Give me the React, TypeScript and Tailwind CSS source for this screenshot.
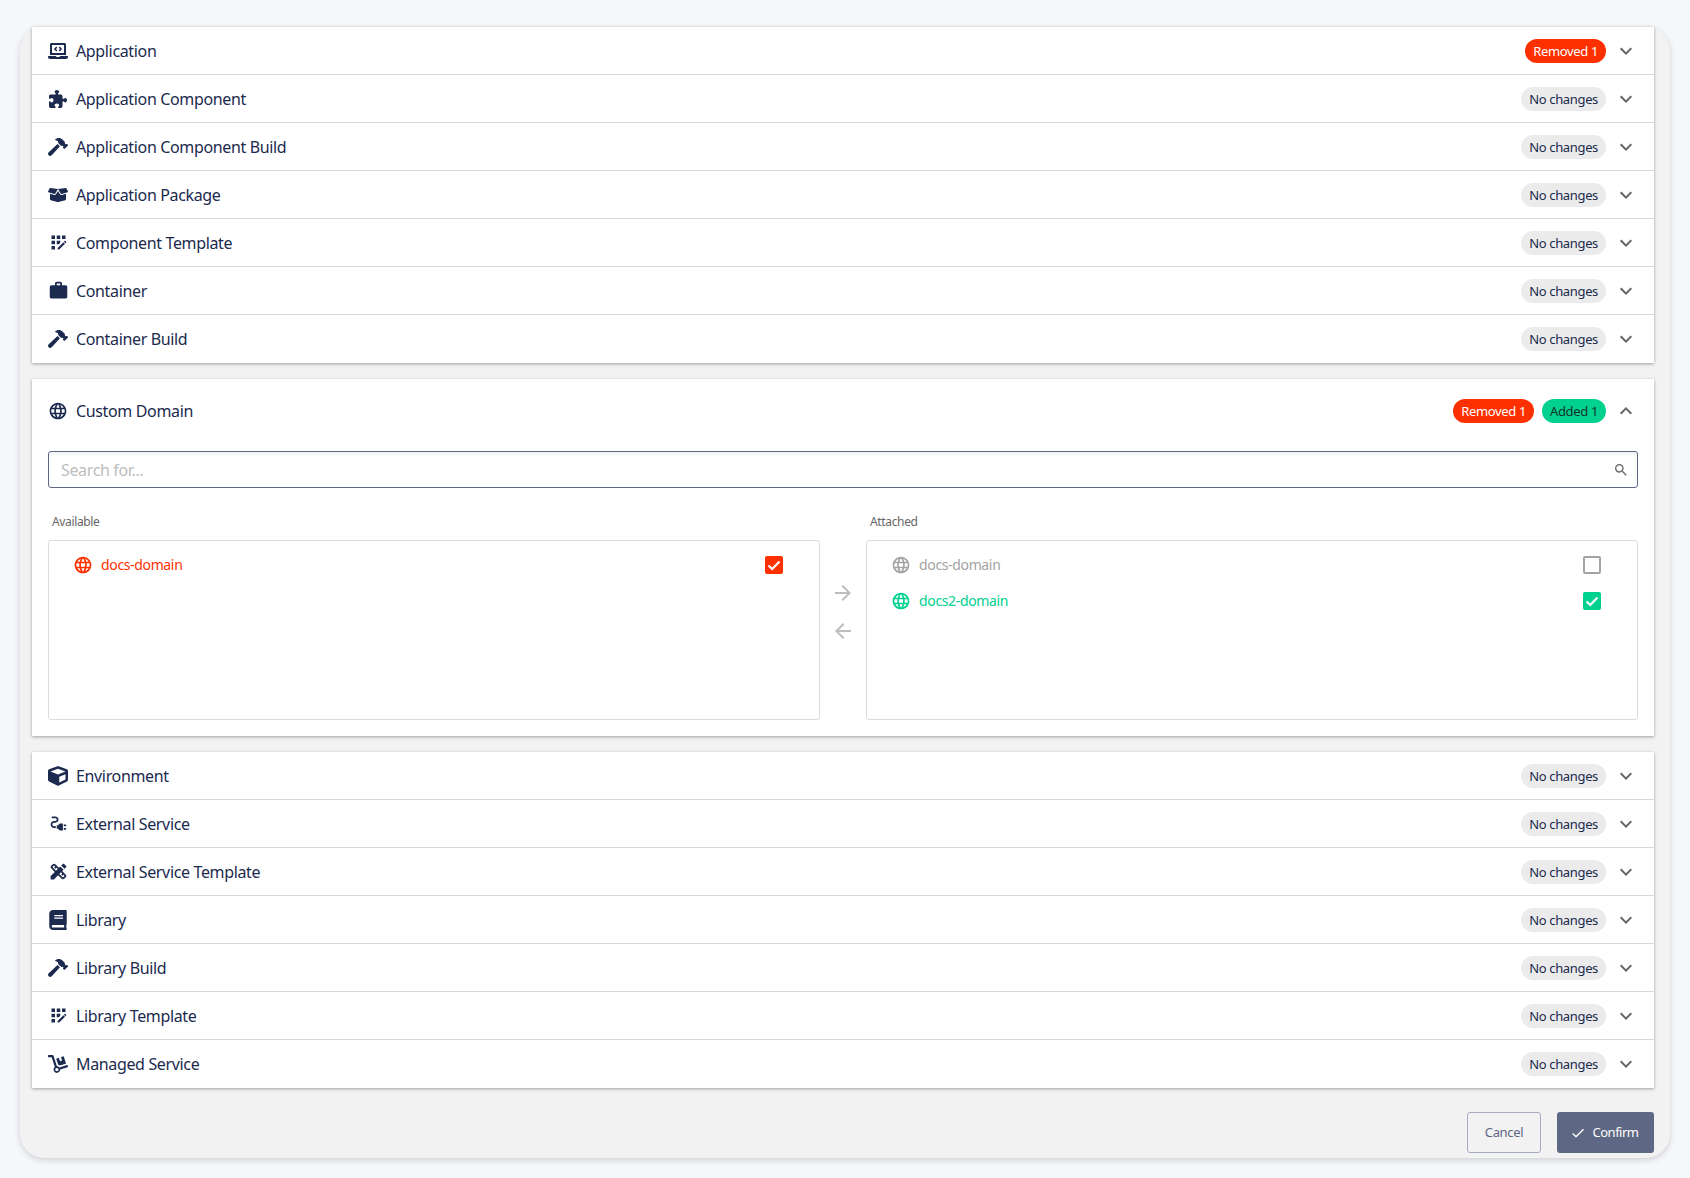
import React from 'react';
import { FaLaptopCode, FaHammer, FaBoxOpen, FaCube, FaBook, FaDolly } from 'react-icons/fa';
import { FaPuzzlePiece } from 'react-icons/fa6';
import { MdAppRegistration, MdDesignServices, MdWork, MdLanguage, MdSearch, MdArrowForward, MdArrowBack, MdElectricalServices, MdCheck, MdKeyboardArrowDown, MdKeyboardArrowUp } from 'react-icons/md';

const icon = 'w-5 h-5';
const matIcon = 'w-[21px] h-[21px] shrink-0';

const topRows = [
  { label: 'Application', icon: <FaLaptopCode className={icon} />, removed: true },
  { label: 'Application Component', icon: <FaPuzzlePiece className="w-[18px] h-[18px]" /> },
  { label: 'Application Component Build', icon: <FaHammer className={icon} /> },
  { label: 'Application Package', icon: <FaBoxOpen className={icon} /> },
  { label: 'Component Template', icon: <MdAppRegistration className={matIcon} /> },
  { label: 'Container', icon: <MdWork className={matIcon} /> },
  { label: 'Container Build', icon: <FaHammer className={icon} /> },
];

const bottomRows = [
  { label: 'Environment', icon: <FaCube className={icon} /> },
  { label: 'External Service', icon: <MdElectricalServices className={matIcon} /> },
  { label: 'External Service Template', icon: <MdDesignServices className={matIcon} /> },
  { label: 'Library', icon: <FaBook className={icon} /> },
  { label: 'Library Build', icon: <FaHammer className={icon} /> },
  { label: 'Library Template', icon: <MdAppRegistration className={matIcon} /> },
  { label: 'Managed Service', icon: <FaDolly className={icon} /> },
];

const Removed = () => (
  <span className="h-6 px-2 pt-[2px] rounded-full bg-[#ff3000] text-white text-[13px] flex items-center">Removed 1</span>
);

const Row = ({ label, icon, removed }: { label: string; icon: React.ReactNode; removed?: boolean }) => (
  <div className="h-12 flex items-center pl-4 pr-[18px] border-b border-[#d9d9d9] last:border-b-0">
    <span className="w-5 flex justify-center shrink-0">{icon}</span>
    <span className="ml-2 text-base">{label}</span>
    <div className="ml-auto flex items-center gap-[10px]">
      {removed ? (
        <Removed />
      ) : (
        <span className="h-6 px-2 pt-[2px] rounded-full bg-[#ebebeb] text-[13px] flex items-center">No changes</span>
      )}
      <MdKeyboardArrowDown className="w-5 h-5 scale-[1.2] text-[#666]" />
    </div>
  </div>
);

const Check = ({ color }: { color: string }) => (
  <span className={`w-[18px] h-[18px] rounded-[2px] flex items-center justify-center text-white ${color}`}>
    <svg viewBox="0 0 18 18" className="w-[18px] h-[18px]" fill="none" stroke="currentColor" strokeWidth="2.2">
      <path d="M3.5 9.5 7.2 13 14.5 5.5" />
    </svg>
  </span>
);

const Item = ({ name, color, box }: { name: string; color: string; box: React.ReactNode }) => (
  <div className="h-9 flex items-center pl-[24px] pr-[36px]">
    <MdLanguage className={`w-5 h-5 ${color}`} />
    <span className={`ml-2 text-sm ${color}`}>{name}</span>
    <span className="ml-auto">{box}</span>
  </div>
);

export default function App() {
  return (
    <div className="min-h-screen bg-[#f5f7fb] pt-[27px] px-5 text-[#1b2a4e] tracking-[-0.022em] font-['Noto_Sans',sans-serif]">
      <div className="h-[1131px] rounded-[24px] bg-[#f2f2f2] pl-3 pr-4 shadow-[0_2px_6px_rgba(0,0,0,0.16)] flex flex-col">
        <div className="bg-white shadow-[0_1px_3px_rgba(0,0,0,0.35)]">
          {topRows.map((r) => (
            <Row key={r.label} {...r} />
          ))}
        </div>

        <div className="mt-4 h-[357px] bg-white shadow-[0_1px_3px_rgba(0,0,0,0.35)] px-4">
          <div className="h-[64px] flex items-center pr-[2px]">
            <span className="w-5 flex justify-center">
              <MdLanguage className={icon} />
            </span>
            <span className="ml-2 text-base">Custom Domain</span>
            <div className="ml-auto flex items-center gap-2">
              <Removed />
              <span className="h-6 px-2 pt-[2px] rounded-full bg-[#00d18f] text-[#12332c] text-[13px] flex items-center">Added 1</span>
              <MdKeyboardArrowUp className="w-5 h-5 ml-[2px] scale-[1.2] text-[#666]" />
            </div>
          </div>

          <div className="mt-[8px] relative">
            <input
              placeholder="Search for..."
              className="w-full h-[37px] pl-3 pr-8 rounded-[3px] border border-[#5e6783] text-base outline-none placeholder:text-[#bdbdbd] shadow-[inset_0_2px_4px_rgba(0,0,0,0.06)]"
            />
            <MdSearch className="absolute right-[9px] top-[11px] w-4 h-4 text-[#666]" />
          </div>

          <div className="mt-[25px] grid grid-cols-[772px_46px_772px]">
            <div>
              <div className="h-[17px] pl-1 text-xs leading-[17px] text-[#666]">Available</div>
              <div className="mt-[10px] h-[180px] py-1 rounded-[3px] border border-[#dcdcdc]">
                <div className="mt-[2px]">
                  <Item name="docs-domain" color="text-[#ff3000]" box={<Check color="bg-[#ff3000]" />} />
                </div>
              </div>
            </div>
            <div className="flex flex-col items-center pt-[68px] gap-[14px] text-[#bdbdbd]">
              <MdArrowForward className="w-6 h-6" />
              <MdArrowBack className="w-6 h-6" />
            </div>
            <div>
              <div className="h-[17px] pl-1 text-xs leading-[17px] text-[#666]">Attached</div>
              <div className="mt-[10px] h-[180px] py-1 rounded-[3px] border border-[#dcdcdc]">
                <div className="mt-[2px]">
                  <Item
                    name="docs-domain"
                    color="text-[#a3a3a3]"
                    box={<span className="block w-[18px] h-[18px] rounded-[2px] border-2 border-[#a3a3a3]" />}
                  />
                  <Item name="docs2-domain" color="text-[#00d18f]" box={<Check color="bg-[#00d18f]" />} />
                </div>
              </div>
            </div>
          </div>
        </div>

        <div className="mt-4 bg-white shadow-[0_1px_3px_rgba(0,0,0,0.35)]">
          {bottomRows.map((r) => (
            <Row key={r.label} {...r} />
          ))}
        </div>

        <div className="mt-6 flex justify-end gap-4">
          <button className="w-[74px] h-[41px] rounded-[3px] border border-[#a5abc4] text-[13px] text-[#5e6783]">Cancel</button>
          <button className="w-[97px] h-[41px] pr-[3px] rounded-[3px] bg-[#5e6783] text-white text-[13px] tracking-[-0.04em] flex items-center justify-center gap-[7px]">
            <MdCheck className="w-4 h-4" />
            Confirm
          </button>
        </div>
      </div>
    </div>
  );
}
